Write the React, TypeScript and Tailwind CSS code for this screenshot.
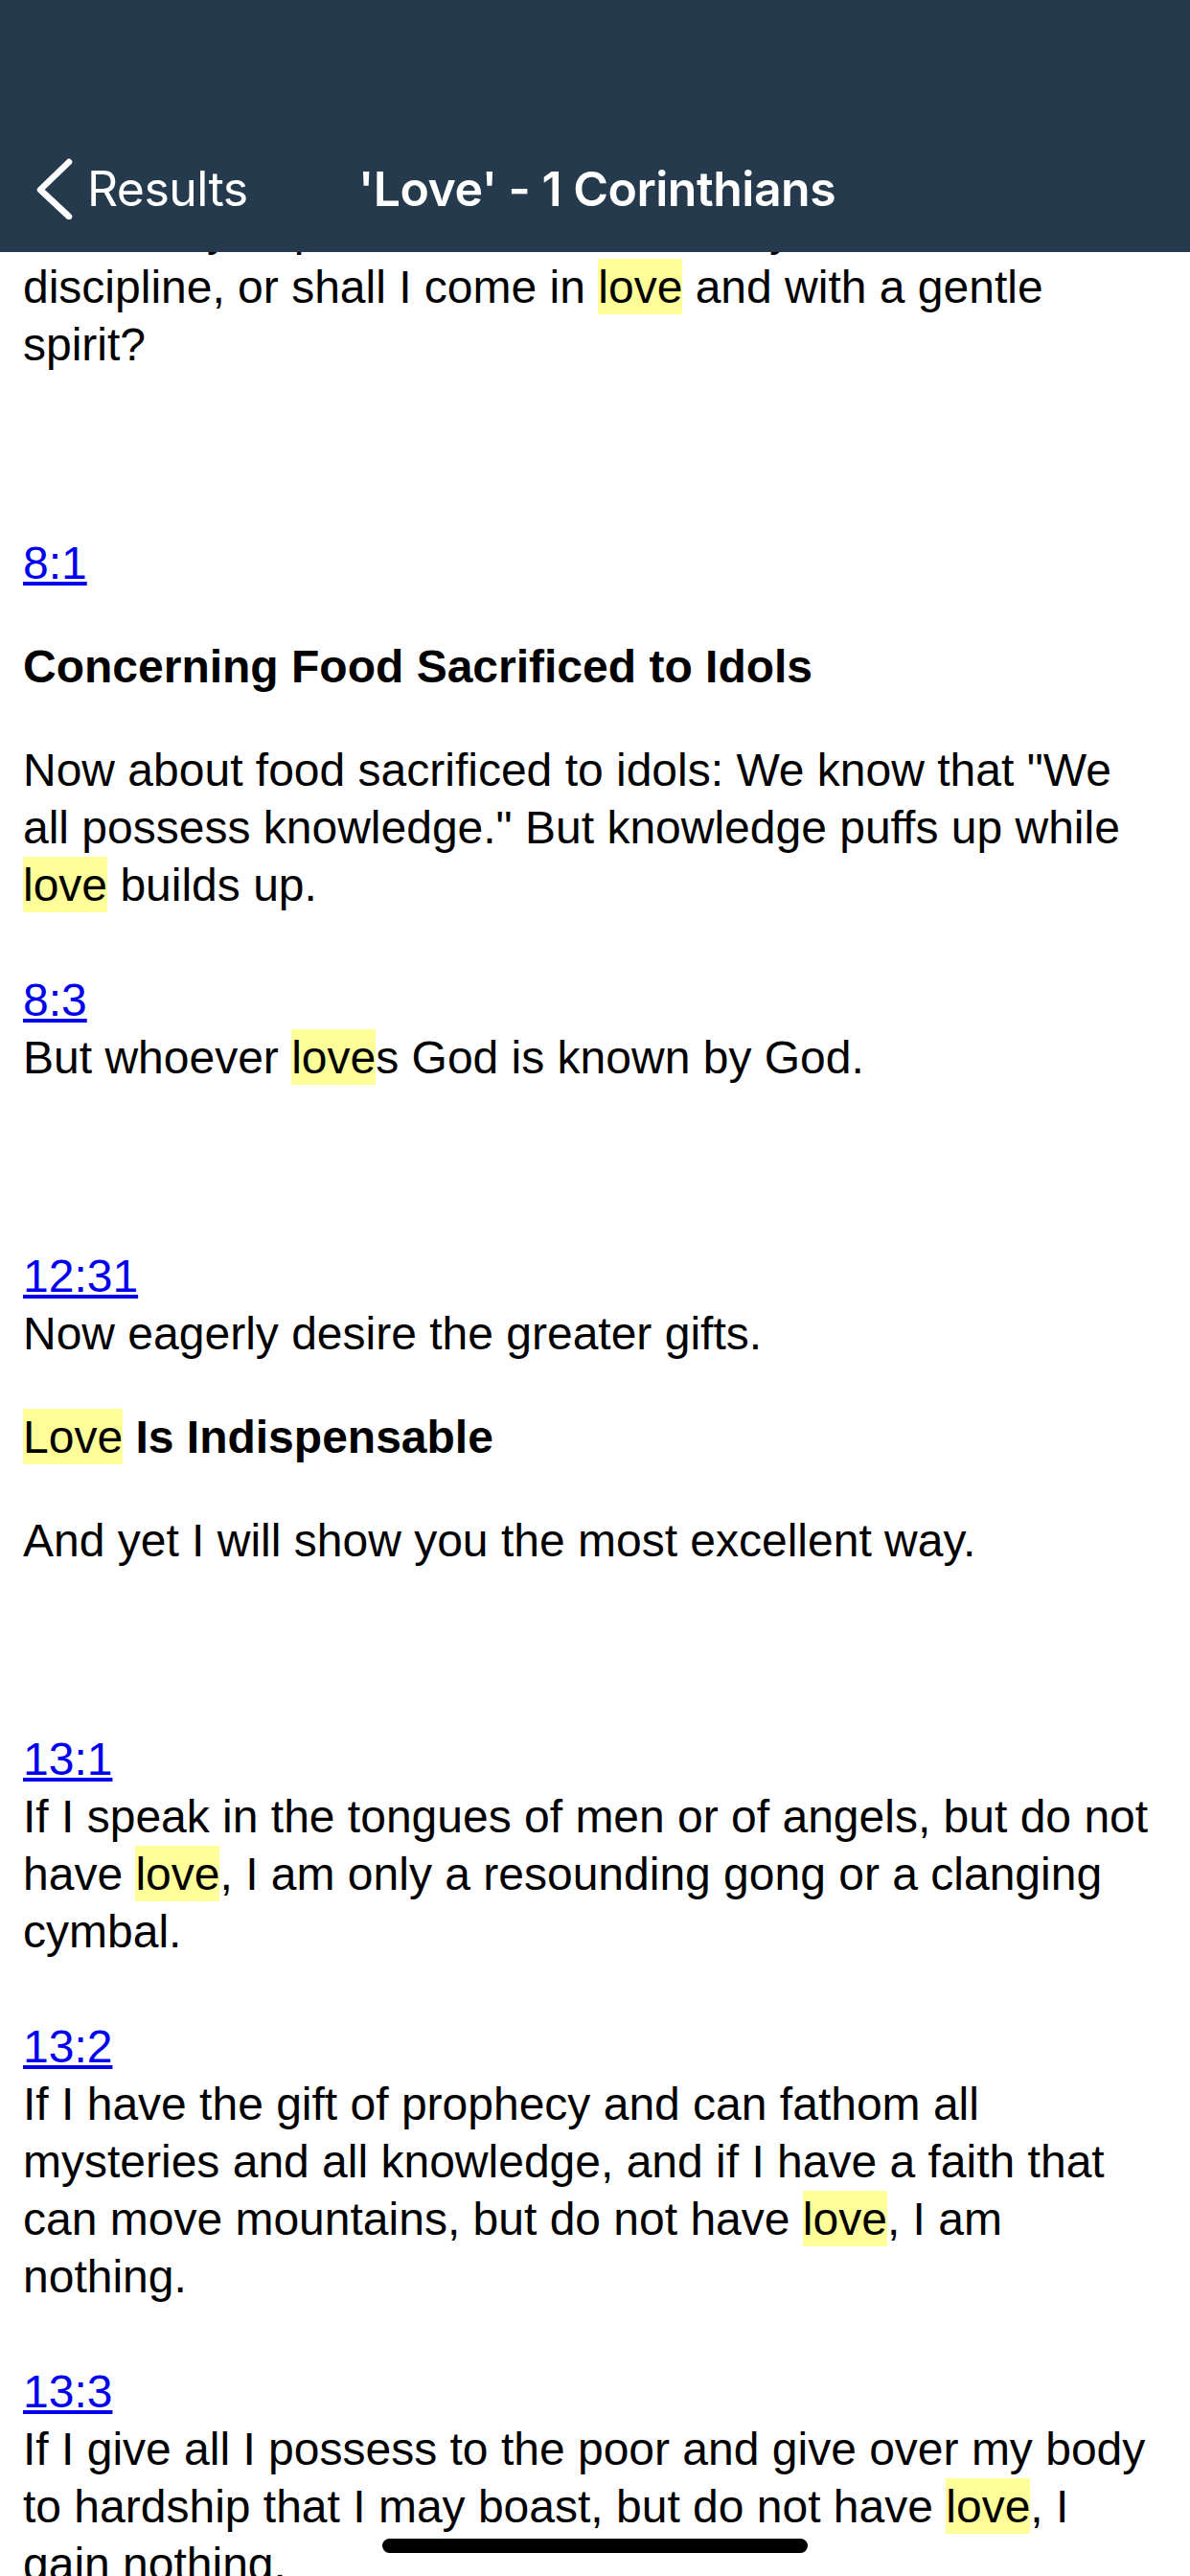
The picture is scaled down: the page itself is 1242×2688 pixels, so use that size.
import React from "react";

const Hl = ({ children }: { children: React.ReactNode }) => (
  <span className="bg-[#ffff99] pt-[3px] pb-[2px] font-normal">{children}</span>
);

const VerseLink = ({ children }: { children: React.ReactNode }) => (
  <div>
    <a href="#" className="text-[#0000ee] underline">
      {children}
    </a>
  </div>
);

export default function App() {
  return (
    <div
      className="relative w-[1242px] h-[2688px] overflow-hidden bg-white text-black"
      style={{ fontFamily: '"Liberation Sans", Arial, Helvetica, sans-serif' }}
    >
      {/* scrolled content */}
      <div className="pt-[210px] pl-[24px] text-[48px] leading-[60px] whitespace-nowrap">
        <p>
          What do you prefer? Shall I come to you with a rod of
          <br />
          discipline, or shall I come in <Hl>love</Hl> and with a gentle
          <br />
          spirit?
        </p>

        <div className="mt-[168px]">
          <VerseLink>8:1</VerseLink>
        </div>
        <p className="mt-[48px] font-bold">Concerning Food Sacrificed to Idols</p>
        <p className="mt-[48px]">
          Now about food sacrificed to idols: We know that "We
          <br />
          all possess knowledge." But knowledge puffs up while
          <br />
          <Hl>love</Hl> builds up.
        </p>

        <div className="mt-[60px]">
          <VerseLink>8:3</VerseLink>
        </div>
        <p>
          But whoever <Hl>love</Hl>s God is known by God.
        </p>

        <div className="mt-[168px]">
          <VerseLink>12:31</VerseLink>
        </div>
        <p>Now eagerly desire the greater gifts.</p>
        <p className="mt-[48px] font-bold">
          <Hl>Love</Hl> Is Indispensable
        </p>
        <p className="mt-[48px]">And yet I will show you the most excellent way.</p>

        <div className="mt-[168px]">
          <VerseLink>13:1</VerseLink>
        </div>
        <p>
          If I speak in the tongues of men or of angels, but do not
          <br />
          have <Hl>love</Hl>, I am only a resounding gong or a clanging
          <br />
          cymbal.
        </p>

        <div className="mt-[60px]">
          <VerseLink>13:2</VerseLink>
        </div>
        <p>
          If I have the gift of prophecy and can fathom all
          <br />
          mysteries and all knowledge, and if I have a faith that
          <br />
          can move mountains, but do not have <Hl>love</Hl>, I am
          <br />
          nothing.
        </p>

        <div className="mt-[60px]">
          <VerseLink>13:3</VerseLink>
        </div>
        <p>
          If I give all I possess to the poor and give over my body
          <br />
          to hardship that I may boast, but do not have <Hl>love</Hl>, I
          <br />
          gain nothing.
        </p>
      </div>

      {/* navigation bar overlay */}
      <div
        className="absolute top-0 left-0 right-0 z-10 h-[263px] bg-[#263a4e] flex flex-col justify-end text-white"
        style={{ fontFamily: 'Inter, "Noto Sans", sans-serif' }}
      >
        <div className="h-[132px] flex items-center">
          <div className="w-[374px] flex items-center pl-[38px]">
            <svg width="38" height="64" viewBox="0 0 38 64" fill="none">
              <polyline
                points="34,4 4,33 34,61"
                stroke="white"
                strokeWidth="6.5"
                strokeLinecap="round"
                strokeLinejoin="round"
              />
            </svg>
            <span className="ml-[15px] text-[50px] tracking-[-0.6px] leading-none">Results</span>
          </div>
          <span className="text-[50px] font-semibold tracking-[-0.5px] leading-none">
            'Love' - 1 Corinthians
          </span>
        </div>
      </div>

      {/* home indicator */}
      <div className="absolute left-[399px] top-[2649px] w-[444px] h-[15px] rounded-full bg-black z-20" />
    </div>
  );
}
